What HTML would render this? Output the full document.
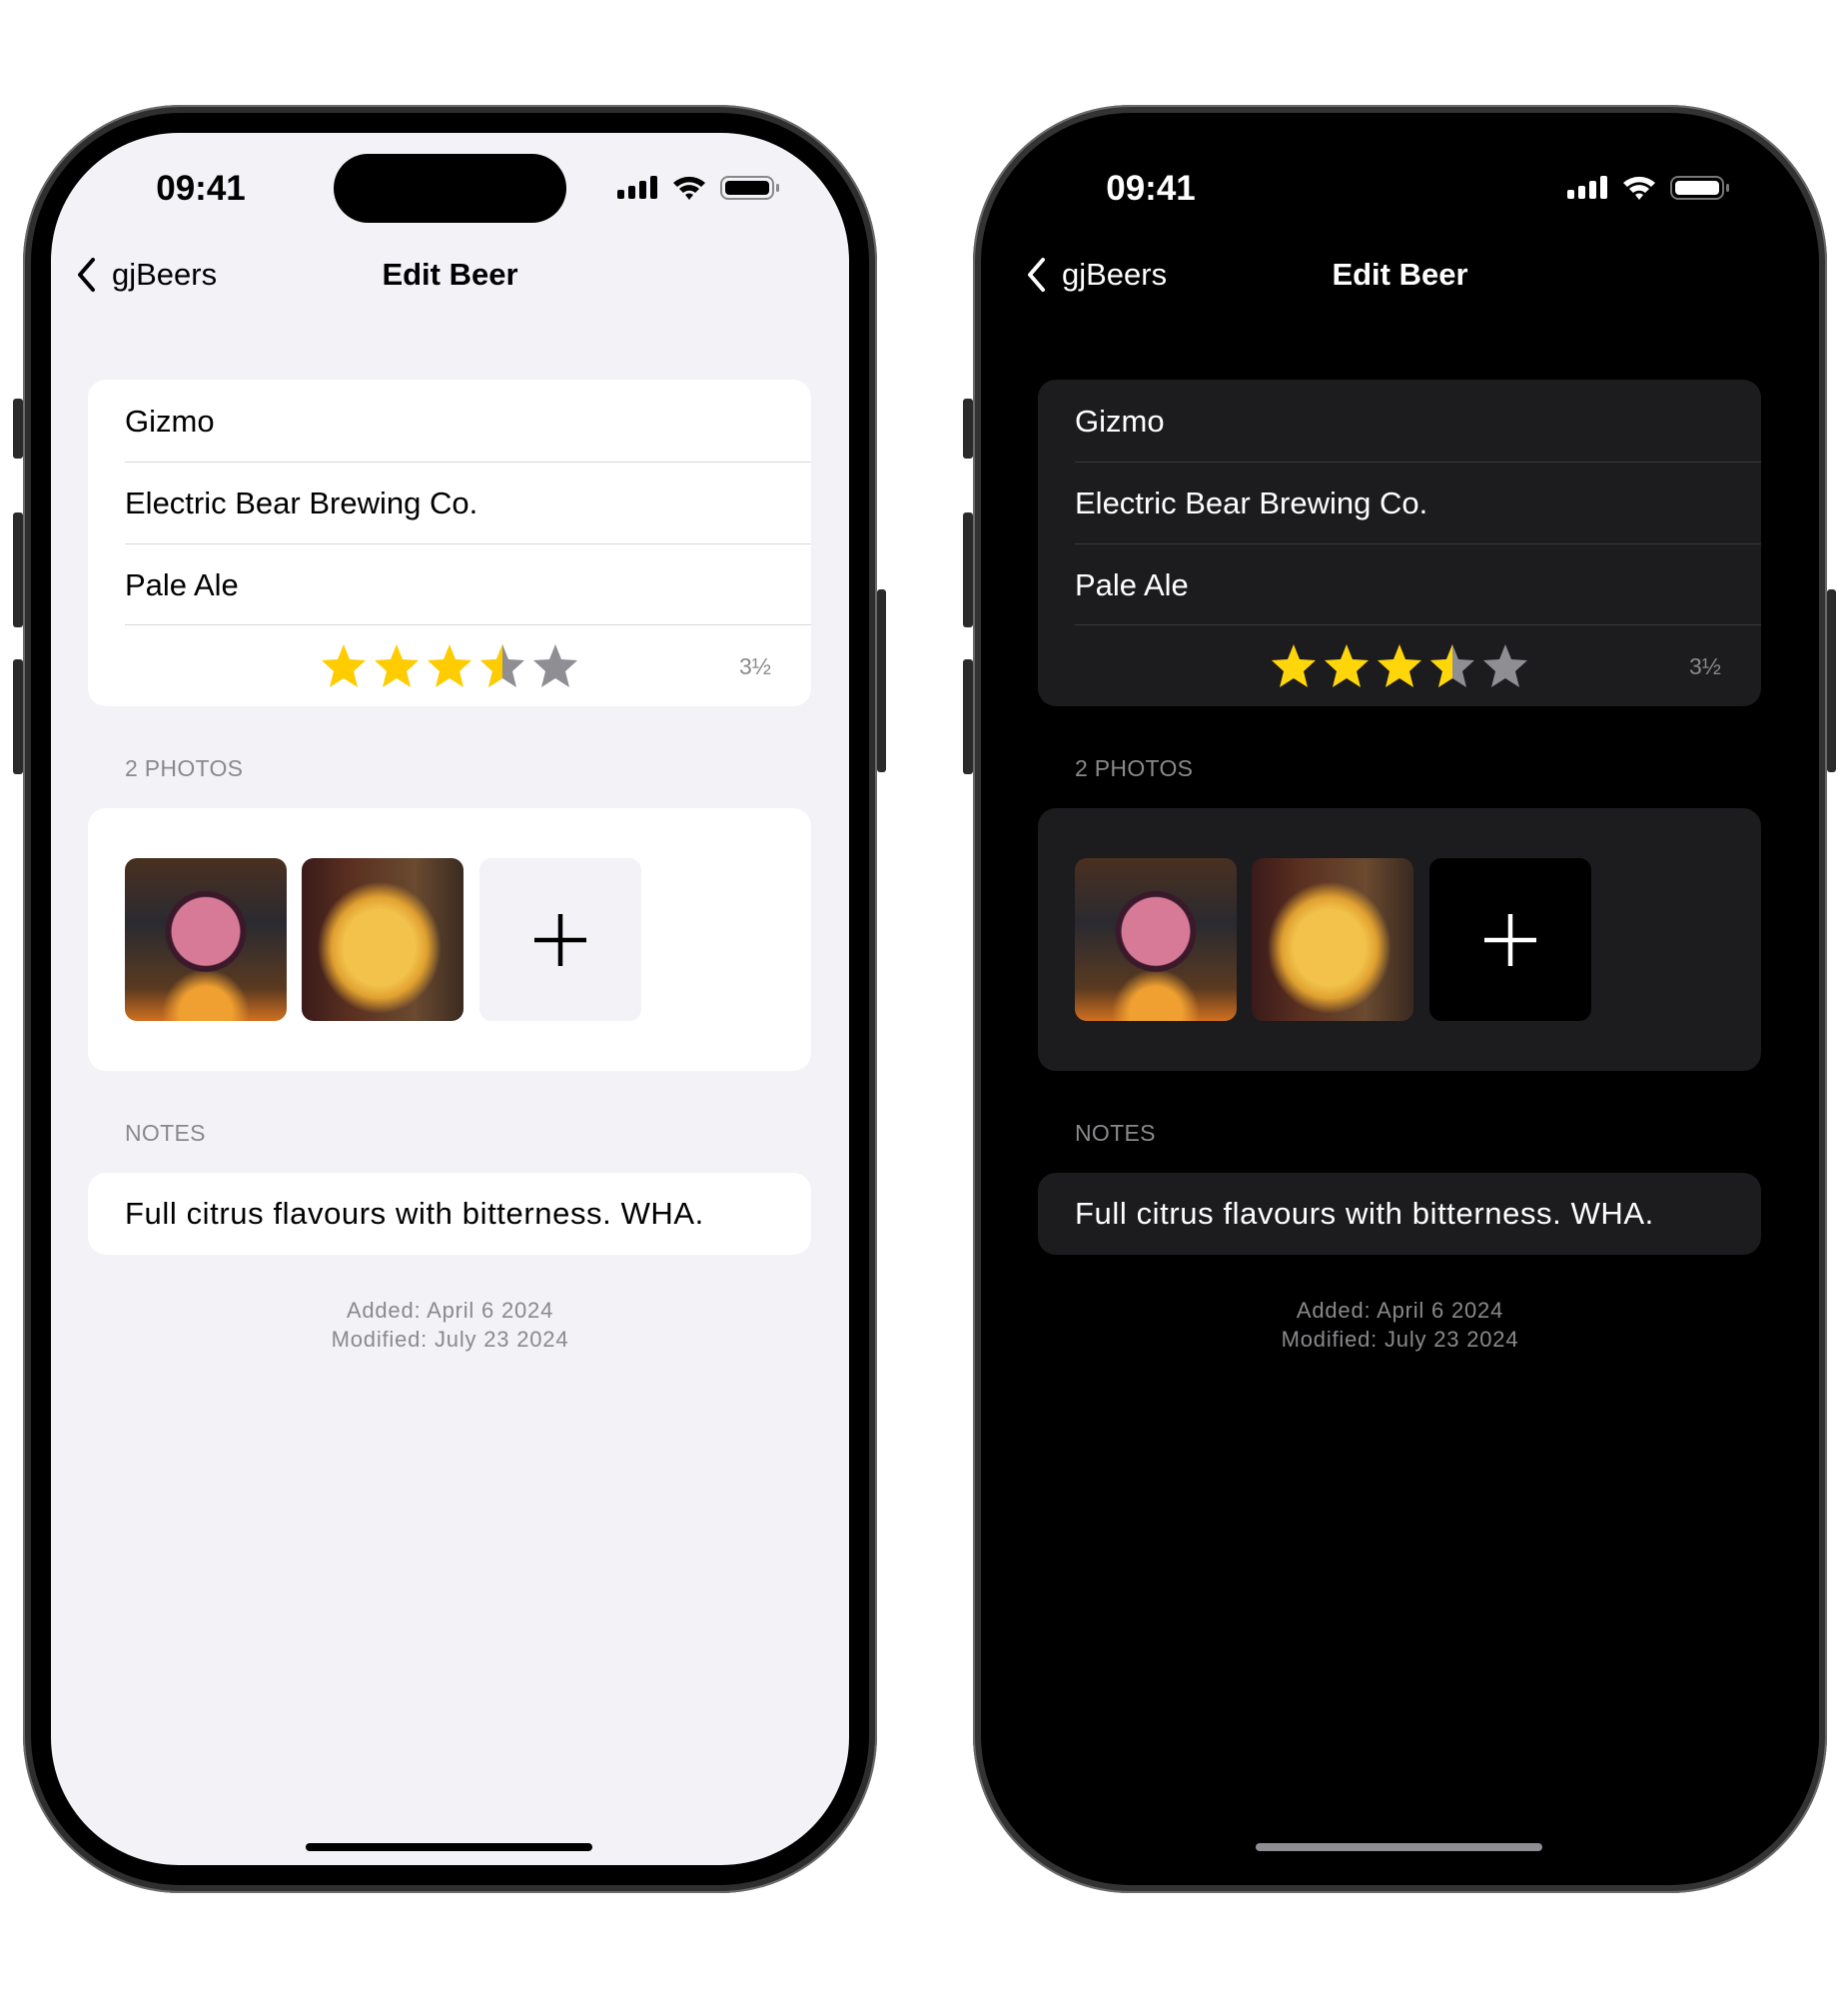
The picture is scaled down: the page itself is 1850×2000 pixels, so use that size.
<!DOCTYPE html>
<html><head><meta charset="utf-8"><style>
*{margin:0;padding:0;box-sizing:border-box}
body{width:1850px;height:2000px;background:#fff;position:relative;overflow:hidden;font-family:"Liberation Sans",sans-serif}
.abs{position:absolute}
.btn{position:absolute;background:#2a2a2a;border-radius:3px}
.phone{position:absolute;top:105px;width:855px;height:1790px;border-radius:158px;background:#2e2e2e;box-shadow:0 0 0 2px #6a6a6a inset}
.phone .inner{position:absolute;left:8px;top:8px;right:8px;bottom:8px;border-radius:150px;background:#000}
.screen{position:absolute;left:28px;top:28px;width:799px;height:1734px;border-radius:128px;overflow:hidden}
.light .screen{background:#f2f2f7;color:#000}
.dark .screen{background:#000;color:#fff}
.island{position:absolute;left:283px;top:21px;width:233px;height:69px;border-radius:35px;background:#000}
.time{position:absolute;left:85px;top:35px;width:130px;text-align:center;font-weight:bold;font-size:35px;line-height:42px}
.card{position:absolute;left:37px;width:724px;border-radius:18px}
.light .card{background:#fff}
.dark .card{background:#1c1c1e}
.row{position:absolute;left:37px;font-size:31px;line-height:36px}
.sep{position:absolute;left:37px;right:0;height:1px}
.light .sep{background:#d8d8dc}
.dark .sep{background:#38383a}
.hdr{position:absolute;left:74px;font-size:23px;color:#8a8a8e;letter-spacing:.3px}
.meta{position:absolute;left:0;width:799px;text-align:center;font-size:22px;line-height:29px;color:#8a8a8e;letter-spacing:.8px}
.photo{position:absolute;top:50px;width:162px;height:163px;border-radius:12px;overflow:hidden}
.plus{position:absolute;top:50px;left:392px;width:162px;height:163px;border-radius:12px}
.light .plus{background:#f2f2f7}
.dark .plus{background:#000}
.home{position:absolute;left:255px;top:1712px;width:287px;height:8px;border-radius:4px}
.light .home{background:#000}
.dark .home{background:#8e8e93}
</style></head><body>

<div class="btn" style="left:13px;top:399px;width:10px;height:60px"></div>
<div class="btn" style="left:13px;top:513px;width:10px;height:115px"></div>
<div class="btn" style="left:13px;top:660px;width:10px;height:115px"></div>
<div class="btn" style="left:878px;top:590px;width:9px;height:183px"></div>
<div class="btn" style="left:964px;top:399px;width:10px;height:60px"></div>
<div class="btn" style="left:964px;top:513px;width:10px;height:115px"></div>
<div class="btn" style="left:964px;top:660px;width:10px;height:115px"></div>
<div class="btn" style="left:1829px;top:590px;width:9px;height:183px"></div>

<!-- LIGHT -->
<div class="phone light" style="left:23px">
<div class="inner"></div>
<div class="screen">
  <div class="island"></div>
  <div class="time">09:41</div>
  <svg class="abs" style="left:567px;top:42px" width="180" height="26" viewBox="0 0 180 26">
    <g fill="#000"><rect x="0" y="15" width="7" height="9" rx="2"/><rect x="11" y="11" width="7" height="13" rx="2"/><rect x="22" y="6" width="7" height="18" rx="2"/><rect x="33" y="1" width="7" height="23" rx="2"/></g>
    <g fill="#000"><path d="M56 8 A24 24 0 0 1 88 8 L84 12 A18 18 0 0 0 60 12Z"/><path d="M62 14 A15 15 0 0 1 82 14 L78 18 A9 9 0 0 0 66 18Z"/><path d="M68 20 A6 6 0 0 1 76 20 L72 25Z"/></g>
    <rect x="104" y="2" width="52" height="22" rx="7" fill="none" stroke="#888" stroke-width="2"/>
    <rect x="108" y="6" width="44" height="14" rx="4" fill="#000"/>
    <rect x="159" y="9" width="3" height="8" rx="1.5" fill="#888"/>
  </svg>
  <svg class="abs" style="left:24px;top:124px" width="24" height="36" viewBox="0 0 24 36"><path d="M18 3 L5 18 L18 33" fill="none" stroke="#000" stroke-width="4" stroke-linecap="round" stroke-linejoin="round"/></svg>
  <div class="abs" style="left:61px;top:124px;font-size:31px;line-height:36px">gjBeers</div>
  <div class="abs" style="left:0;width:799px;text-align:center;top:124px;font-size:31px;line-height:36px;font-weight:bold">Edit Beer</div>

  <div class="card" style="top:247px;height:327px">
    <div class="row" style="top:24px">Gizmo</div>
    <div class="sep" style="top:82px"></div>
    <div class="row" style="top:106px">Electric Bear Brewing Co.</div>
    <div class="sep" style="top:164px"></div>
    <div class="row" style="top:188px">Pale Ale</div>
    <div class="sep" style="top:245px"></div>
    <svg class="abs" style="left:233px;top:263px" width="270" height="50" viewBox="0 0 270 50">
      <defs><polygon id="st" points="23,2 29,17 45,18 33,29 37,45 23,36 9,45 13,29 1,18 17,17"/><clipPath id="hl"><rect x="0" y="0" width="23" height="50"/></clipPath></defs>
      <use href="#st" x="0" fill="#ffcc00"/><use href="#st" x="53" fill="#ffcc00"/><use href="#st" x="106" fill="#ffcc00"/>
      <use href="#st" x="159" fill="#8e8e93"/><g transform="translate(159 0)"><use href="#st" fill="#ffcc00" clip-path="url(#hl)"/></g>
      <use href="#st" x="212" fill="#8e8e93"/>
    </svg>
    <div class="abs" style="left:652px;top:274px;font-size:23px;color:#8a8a8e">3½</div>
  </div>

  <div class="hdr" style="top:623px">2 PHOTOS</div>
  <div class="card" style="top:676px;height:263px">
    <div class="photo" style="left:37px;background:radial-gradient(circle at 50% 45%,#d77a98 0 28%,#3a1a2a 29% 33%,transparent 34%),radial-gradient(circle at 50% 95%,#f0a030 0 15%,transparent 25%),linear-gradient(180deg,#4a3020,#2a2a30 40%,#5a3a20 80%,#d07020)"></div>
    <div class="photo" style="left:214px;background:radial-gradient(ellipse at 48% 55%,#f2c24a 0 30%,#e0a030 40%,transparent 52%),linear-gradient(90deg,#3a1a1a,#5a3020 30%,#6a4a30 70%,#3a2a20)"></div>
    <div class="plus"><svg width="162" height="163"><path d="M81 56V108M55 82H107" stroke="#000" stroke-width="4.5"/></svg></div>
  </div>

  <div class="hdr" style="top:988px">NOTES</div>
  <div class="card" style="top:1041px;height:82px">
    <div class="row" style="top:23px;letter-spacing:.6px">Full citrus flavours with bitterness. WHA.</div>
  </div>
  <div class="meta" style="top:1164px">Added: April 6 2024<br>Modified: July 23 2024</div>
  <div class="home"></div>
</div>
</div>

<!-- DARK -->
<div class="phone dark" style="left:974px;background:#333">
<div class="inner"></div>
<div class="screen">
  <div class="time">09:41</div>
  <svg class="abs" style="left:567px;top:42px" width="180" height="26" viewBox="0 0 180 26">
    <g fill="#fff"><rect x="0" y="15" width="7" height="9" rx="2"/><rect x="11" y="11" width="7" height="13" rx="2"/><rect x="22" y="6" width="7" height="18" rx="2"/><rect x="33" y="1" width="7" height="23" rx="2"/></g>
    <g fill="#fff"><path d="M56 8 A24 24 0 0 1 88 8 L84 12 A18 18 0 0 0 60 12Z"/><path d="M62 14 A15 15 0 0 1 82 14 L78 18 A9 9 0 0 0 66 18Z"/><path d="M68 20 A6 6 0 0 1 76 20 L72 25Z"/></g>
    <rect x="104" y="2" width="52" height="22" rx="7" fill="none" stroke="#777" stroke-width="2"/>
    <rect x="108" y="6" width="44" height="14" rx="4" fill="#fff"/>
    <rect x="159" y="9" width="3" height="8" rx="1.5" fill="#777"/>
  </svg>
  <svg class="abs" style="left:24px;top:124px" width="24" height="36" viewBox="0 0 24 36"><path d="M18 3 L5 18 L18 33" fill="none" stroke="#fff" stroke-width="4" stroke-linecap="round" stroke-linejoin="round"/></svg>
  <div class="abs" style="left:61px;top:124px;font-size:31px;line-height:36px">gjBeers</div>
  <div class="abs" style="left:0;width:799px;text-align:center;top:124px;font-size:31px;line-height:36px;font-weight:bold">Edit Beer</div>

  <div class="card" style="top:247px;height:327px">
    <div class="row" style="top:24px">Gizmo</div>
    <div class="sep" style="top:82px"></div>
    <div class="row" style="top:106px">Electric Bear Brewing Co.</div>
    <div class="sep" style="top:164px"></div>
    <div class="row" style="top:188px">Pale Ale</div>
    <div class="sep" style="top:245px"></div>
    <svg class="abs" style="left:233px;top:263px" width="270" height="50" viewBox="0 0 270 50">
      <defs><polygon id="st2" points="23,2 29,17 45,18 33,29 37,45 23,36 9,45 13,29 1,18 17,17"/><clipPath id="hl2"><rect x="0" y="0" width="23" height="50"/></clipPath></defs>
      <use href="#st2" x="0" fill="#ffd60a"/><use href="#st2" x="53" fill="#ffd60a"/><use href="#st2" x="106" fill="#ffd60a"/>
      <use href="#st2" x="159" fill="#8e8e93"/><g transform="translate(159 0)"><use href="#st2" fill="#ffd60a" clip-path="url(#hl2)"/></g>
      <use href="#st2" x="212" fill="#8e8e93"/>
    </svg>
    <div class="abs" style="left:652px;top:274px;font-size:23px;color:#8a8a8e">3½</div>
  </div>

  <div class="hdr" style="top:623px">2 PHOTOS</div>
  <div class="card" style="top:676px;height:263px">
    <div class="photo" style="left:37px;background:radial-gradient(circle at 50% 45%,#d77a98 0 28%,#3a1a2a 29% 33%,transparent 34%),radial-gradient(circle at 50% 95%,#f0a030 0 15%,transparent 25%),linear-gradient(180deg,#4a3020,#2a2a30 40%,#5a3a20 80%,#d07020)"></div>
    <div class="photo" style="left:214px;background:radial-gradient(ellipse at 48% 55%,#f2c24a 0 30%,#e0a030 40%,transparent 52%),linear-gradient(90deg,#3a1a1a,#5a3020 30%,#6a4a30 70%,#3a2a20)"></div>
    <div class="plus"><svg width="162" height="163"><path d="M81 56V108M55 82H107" stroke="#fff" stroke-width="4.5"/></svg></div>
  </div>

  <div class="hdr" style="top:988px">NOTES</div>
  <div class="card" style="top:1041px;height:82px">
    <div class="row" style="top:23px;letter-spacing:.6px">Full citrus flavours with bitterness. WHA.</div>
  </div>
  <div class="meta" style="top:1164px">Added: April 6 2024<br>Modified: July 23 2024</div>
  <div class="home"></div>
</div>
</div>

</body></html>
